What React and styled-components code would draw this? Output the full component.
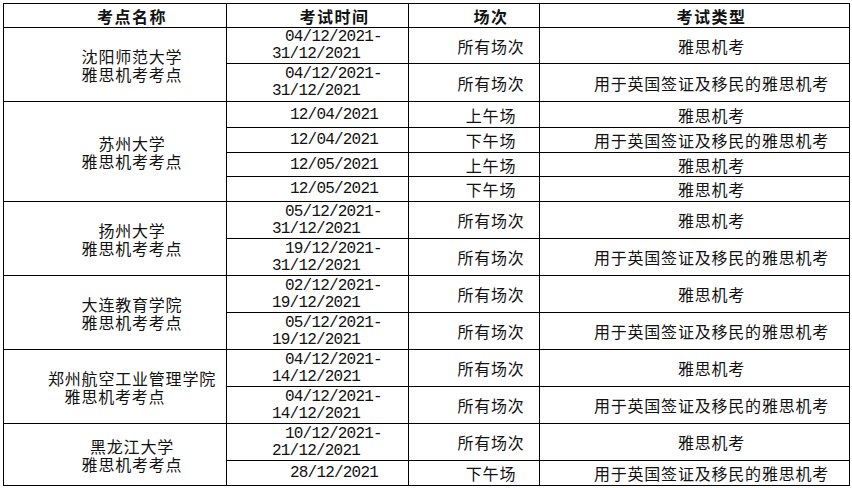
import React from 'react';
import styled, { createGlobalStyle } from 'styled-components';

const UKVI = '用于英国签证及移民的雅思机考';
const CBT = '雅思机考';

const sites = [
  {
    name: ['沈阳师范大学', '雅思机考考点'],
    rows: [
      { date: ['04/12/2021-', '31/12/2021'], session: '所有场次', type: CBT, h: 36 },
      { date: ['04/12/2021-', '31/12/2021'], session: '所有场次', type: UKVI, h: 38 },
    ],
  },
  {
    name: ['苏州大学', '雅思机考考点'],
    rows: [
      { date: ['12/04/2021'], session: '上午场', type: CBT, h: 26 },
      { date: ['12/04/2021'], session: '下午场', type: UKVI, h: 25 },
      { date: ['12/05/2021'], session: '上午场', type: CBT, h: 24 },
      { date: ['12/05/2021'], session: '下午场', type: CBT, h: 25 },
    ],
  },
  {
    name: ['扬州大学', '雅思机考考点'],
    rows: [
      { date: ['05/12/2021-', '31/12/2021'], session: '所有场次', type: CBT, h: 37 },
      { date: ['19/12/2021-', '31/12/2021'], session: '所有场次', type: UKVI, h: 37 },
    ],
  },
  {
    name: ['大连教育学院', '雅思机考考点'],
    rows: [
      { date: ['02/12/2021-', '19/12/2021'], session: '所有场次', type: CBT, h: 37 },
      { date: ['05/12/2021-', '19/12/2021'], session: '所有场次', type: UKVI, h: 37 },
    ],
  },
  {
    name: ['郑州航空工业管理学院', '雅思机考考点'],
    wideSecond: true,
    rows: [
      { date: ['04/12/2021-', '14/12/2021'], session: '所有场次', type: CBT, h: 37 },
      { date: ['04/12/2021-', '14/12/2021'], session: '所有场次', type: UKVI, h: 37 },
    ],
  },
  {
    name: ['黑龙江大学', '雅思机考考点'],
    rows: [
      { date: ['10/12/2021-', '21/12/2021'], session: '所有场次', type: CBT, h: 37 },
      { date: ['28/12/2021'], session: '下午场', type: UKVI, h: 25 },
    ],
  },
];

const GlobalStyle = createGlobalStyle`
  html, body {
    margin: 0;
    padding: 0;
    background: #fff;
  }
  body {
    font-family: "Noto Sans CJK SC", "Noto Sans", sans-serif;
    color: #111;
  }
`;

const Page = styled.div`
  padding: 3px 0 0 3px;
`;

const Table = styled.table`
  border-collapse: collapse;
  table-layout: fixed;
  width: 846px;
`;

const HeadRow = styled.tr`
  height: 24px;
`;

const Row = styled.tr`
  height: ${p => p.$h}px;
`;

const Th = styled.th`
  border: 1px solid #000;
  padding: 0 0 0 34px;
  font-size: 16px;
  font-weight: 700;
  letter-spacing: 1.5px;
  line-height: 20px;
  text-align: center;
  vertical-align: middle;
`;

const Cell = styled.td`
  border: 1px solid #000;
  padding: 0 0 0 34px;
  font-size: 16px;
  letter-spacing: 0.8px;
  line-height: 18px;
  text-align: center;
  vertical-align: middle;
  white-space: nowrap;
`;

const NameLine = styled.div`
  margin-left: ${p => (p.$wide ? '-34px' : '0')};
`;

const DateCell = styled.td`
  border: 1px solid #000;
  padding: 1px 0 0 45px;
  font-family: "Liberation Mono", "DejaVu Sans Mono", monospace;
  font-size: 16px;
  letter-spacing: -0.8px;
  line-height: 17px;
  text-align: left;
  vertical-align: middle;
  white-space: pre;
`;

const DateLine = styled.div`
  padding-left: ${p => p.$indent}px;
`;

export default function App() {
  return (
    <Page>
      <GlobalStyle />
      <Table>
        <colgroup>
          <col style={{ width: 223 }} />
          <col style={{ width: 182 }} />
          <col style={{ width: 131 }} />
          <col style={{ width: 310 }} />
        </colgroup>
        <thead>
          <HeadRow>
            <Th>考点名称</Th>
            <Th>考试时间</Th>
            <Th>场次</Th>
            <Th>考试类型</Th>
          </HeadRow>
        </thead>
        <tbody>
          {sites.map(site =>
            site.rows.map((r, i) => (
              <Row key={site.name[0] + i} $h={r.h}>
                {i === 0 && (
                  <Cell rowSpan={site.rows.length}>
                    <NameLine>{site.name[0]}</NameLine>
                    <NameLine $wide={site.wideSecond}>{site.name[1]}</NameLine>
                  </Cell>
                )}
                <DateCell>
                  {r.date.map((d, j) => (
                    <DateLine key={j} $indent={r.date.length === 1 ? 18 : j === 0 ? 13 : 0}>
                      {d}
                    </DateLine>
                  ))}
                </DateCell>
                <Cell>{r.session}</Cell>
                <Cell>{r.type}</Cell>
              </Row>
            ))
          )}
        </tbody>
      </Table>
    </Page>
  );
}
